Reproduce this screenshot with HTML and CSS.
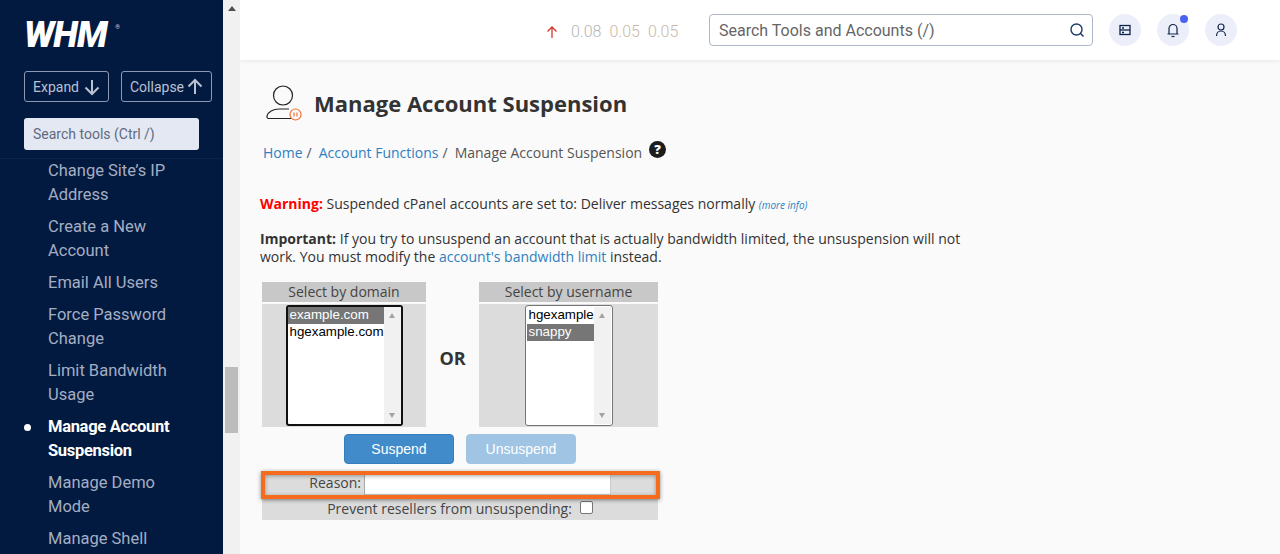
FILE: index.html
```html
<!DOCTYPE html>
<html lang="en">
<head>
    <meta charset="UTF-8">
    <meta name="viewport" content="width=device-width, initial-scale=1.0">
    <title>Manage Account Suspension</title>
    <link rel="stylesheet" href="styles.css">
</head>
<body>

    <!-- Sidebar -->
    <div class="sidebar">
        <div class="side-head">
            <div class="logo">WHM<span class="logo-reg">®</span></div>
            <div class="side-buttons">
                <div class="side-btn btn-expand">Expand
                    <svg width="18" height="18" viewBox="0 0 18 18" fill="none" stroke="#b9c1d3" stroke-width="2"><path d="M9 2v14M2.500 9.500 9 16l6.500-6.500"/></svg>
                </div>
                <div class="side-btn btn-collapse">Collapse
                    <svg width="18" height="18" viewBox="0 0 18 18" fill="none" stroke="#b9c1d3" stroke-width="2"><path d="M9 16V2M2.500 8.500 9 2l6.500 6.500"/></svg>
                </div>
            </div>
            <div class="side-search">Search tools (Ctrl /)</div>
        </div>
        <ul class="side-nav">
            <li>Change Site’s IP Address</li>
            <li>Create a New Account</li>
            <li>Email All Users</li>
            <li>Force Password Change</li>
            <li>Limit Bandwidth Usage</li>
            <li class="active">Manage Account Suspension</li>
            <li>Manage Demo Mode</li>
            <li>Manage Shell Access</li>
        </ul>
    </div>

    <!-- Page scrollbar of the sidebar -->
    <div class="scrollbar">
        <span class="scroll-up"></span>
        <span class="scroll-thumb"></span>
    </div>

    <div class="main">
        <div class="topbar">
            <svg class="load-arrow" width="12" height="14" viewBox="0 0 12 14" fill="none" stroke="#d9342b" stroke-width="1.300"><path d="M6 13V2M1.500 6.500 6 2l4.500 4.500"/></svg>
            <div class="loads"><span>0.08</span><span>0.05</span><span>0.05</span></div>
            <div class="top-search">
                <span>Search Tools and Accounts (/)</span>
                <svg width="16" height="16" viewBox="0 0 16 16" fill="none" stroke="#1f3a68" stroke-width="1.400"><circle cx="7.500" cy="7.500" r="5.500"/><path d="M11.500 11.500 14.500 14.500"/></svg>
            </div>
            <div class="round-btn">
                <svg width="12" height="12" viewBox="0 0 12 12" fill="none" stroke="#10244a" stroke-width="1.300"><rect x="1" y="1.500" width="10" height="9"/><path d="M1 6h10"/><path d="M3 4h2M3 8.500h2"/></svg>
            </div>
            <div class="round-btn">
                <svg width="14" height="16" viewBox="0 0 14 16" fill="none" stroke="#10244a" stroke-width="1.200"><path d="M1.500 12h11M3 12V6.500a4 4 0 0 1 8 0V12"/><path d="M5.500 14.500h3"/></svg>
                <span class="notify-dot"></span>
            </div>
            <div class="round-btn">
                <svg width="14" height="16" viewBox="0 0 14 16" fill="none" stroke="#10244a" stroke-width="1.200"><circle cx="7" cy="5" r="3"/><path d="M2.500 14c0-3 2-5 4.500-5s4.500 2 4.500 5"/></svg>
            </div>
        </div>

        <div class="content">
            <div class="page-title">
                <svg width="42" height="40" viewBox="0 0 42 40" fill="none">
                    <circle cx="20" cy="12.500" r="9.500" stroke="#222" stroke-width="1.200"/>
                    <path d="M28 35.500H6.500c-2 0-3-1-2.500-2.500 1-4 6-7 12-7h10" stroke="#222" stroke-width="1.200"/>
                    <circle cx="32.500" cy="31.500" r="5.500" fill="#fafafa" stroke="#f07238" stroke-width="1.200"/>
                    <path d="M31 29.500v4M34 29.500v4" stroke="#f07238" stroke-width="1.200"/>
                </svg>
                <h1>Manage Account Suspension</h1>
            </div>

            <div class="breadcrumb">
                <a href="#">Home</a><span class="sep">/</span>
                <a href="#">Account Functions</a><span class="sep">/</span>
                <span>Manage Account Suspension</span>
                <span class="help">?</span>
            </div>

            <p class="warning"><b>Warning:</b> Suspended cPanel accounts are set to: Deliver messages normally <a class="more" href="#">(more info)</a></p>
            <p class="important"><b>Important:</b> If you try to unsuspend an account that is actually bandwidth limited, the unsuspension will not work. You must modify the <a href="#">account's bandwidth limit</a> instead.</p>

            <div class="suspend-form">
                <div class="pickers">
                    <div class="picker picker-domain">
                        <div class="picker-head">Select by domain</div>
                        <div class="picker-body">
                            <div class="listbox listbox-focus">
                                <div class="options">
                                    <div class="option selected">example.com</div>
                                    <div class="option">hgexample.com</div>
                                </div>
                                <div class="list-scroll"><span class="tri-up"></span><span class="tri-down"></span></div>
                            </div>
                        </div>
                    </div>
                    <div class="or">OR</div>
                    <div class="picker picker-user">
                        <div class="picker-head">Select by username</div>
                        <div class="picker-body">
                            <div class="listbox">
                                <div class="options">
                                    <div class="option">hgexample</div>
                                    <div class="option selected">snappy</div>
                                </div>
                                <div class="list-scroll"><span class="tri-up"></span><span class="tri-down"></span></div>
                            </div>
                        </div>
                    </div>
                </div>

                <div class="form-buttons">
                    <div class="btn">Suspend</div>
                    <div class="btn btn-off">Unsuspend</div>
                </div>

                <div class="reason-wrap">
                    <div class="row-reason">
                        <span class="reason-label">Reason:</span>
                        <span class="reason-input"></span>
                    </div>
                    <div class="highlight"></div>
                </div>
                <div class="row-prevent">
                    <span>Prevent resellers from unsuspending:</span>
                    <span class="checkbox"></span>
                </div>
            </div>
        </div>
    </div>

</body>
</html>
```

FILE: styles.css
```css
* {
    box-sizing: border-box;
}
html, body {
    height: 100%;
}
body {
    margin: 0;
    display: flex;
    height: 554px;
    overflow: hidden;
    font-family: "Open Sans", sans-serif;
    font-size: 14px;
    color: #333;
    background: #fafafa;
}
a {
    color: #2f7fc1;
    text-decoration: none;
}

/* Sidebar */
.sidebar {
    width: 223px;
    flex-shrink: 0;
    background: #031a40;
    font-family: Roboto, sans-serif;
    overflow: hidden;
}
.side-head {
    height: 159px;
    padding: 18px 0 0 24px;
    border-bottom: 1px solid #0d2449;
}
.logo {
    position: relative;
    width: 93px;
    height: 35px;
    font-size: 36px;
    line-height: 35px;
    font-weight: 900;
    font-style: italic;
    color: #fff;
    letter-spacing: -1px;
}
.logo-reg {
    position: absolute;
    top: -9px;
    right: -3px;
    font-size: 6px;
    font-weight: 400;
    font-style: normal;
    letter-spacing: 0;
    color: #cfd5e2;
}
.side-buttons {
    display: flex;
    gap: 12px;
    margin-top: 18px;
}
.side-btn {
    display: flex;
    align-items: center;
    justify-content: space-between;
    height: 31px;
    padding: 0 7px 0 8px;
    border: 1px solid #8d99b3;
    border-radius: 3px;
    font-size: 14px;
    color: #b9c1d3;
}
.btn-expand {
    width: 85px;
}
.btn-collapse {
    width: 91px;
}
.side-search {
    width: 175px;
    height: 32px;
    margin-top: 16px;
    padding-left: 9px;
    background: #e4e8f2;
    border-radius: 3px;
    font-size: 14px;
    line-height: 32px;
    color: #5f6a80;
}
.side-nav {
    list-style: none;
    margin: 0;
    padding: 0 24px 0 48px;
    font-size: 16.500px;
    line-height: 24px;
    color: #a3aec3;
}
.side-nav li {
    margin-bottom: 8px;
    position: relative;
}
.side-nav .active {
    color: #fff;
    font-weight: 700;
    letter-spacing: -0.300px;
}
.side-nav .active::before {
    content: "";
    position: absolute;
    left: -24px;
    top: 9px;
    width: 7px;
    height: 7px;
    border-radius: 50%;
    background: #fff;
}

/* Scrollbar */
.scrollbar {
    position: relative;
    width: 17px;
    flex-shrink: 0;
    background: #f1f1f1;
}
.scroll-up {
    position: absolute;
    top: 6px;
    left: 5px;
    border-left: 4px solid transparent;
    border-right: 4px solid transparent;
    border-bottom: 5px solid #505050;
}
.scroll-thumb {
    position: absolute;
    top: 367px;
    left: 2px;
    width: 13px;
    height: 66px;
    background: #bcbcbc;
}

/* Top bar */
.main {
    flex: 1;
    min-width: 0;
}
.topbar {
    display: flex;
    align-items: center;
    height: 60px;
    padding-right: 32px;
    background: #fff;
    box-shadow: 0 1px 4px rgba(0, 0, 0, 0.08);
}
.load-arrow {
    margin-left: 306px;
    margin-top: 4px;
}
.loads {
    display: flex;
    gap: 8px;
    width: 138px;
    margin-left: 13px;
    margin-top: 3px;
    font-family: Roboto, sans-serif;
    font-weight: 300;
    font-size: 16px;
    color: #b5b5b5;
}
.loads span:nth-child(2), .loads span:nth-child(3) {
    color: #c9b8a8;
}
.top-search {
    display: flex;
    align-items: center;
    justify-content: space-between;
    width: 384px;
    height: 32px;
    padding: 0 7px 0 9px;
    border: 1px solid #aeb6c9;
    border-radius: 4px;
    font-family: Roboto, sans-serif;
    font-size: 16px;
    color: #666;
}
.round-btn {
    position: relative;
    display: flex;
    align-items: center;
    justify-content: center;
    width: 32px;
    height: 32px;
    margin-left: 16px;
    border-radius: 50%;
    background: #eceefa;
}
.notify-dot {
    position: absolute;
    top: 1px;
    right: 1px;
    width: 8px;
    height: 8px;
    border-radius: 50%;
    background: #4a63f0;
}

/* Content */
.content {
    padding: 23px 0 0 20px;
}
.page-title {
    display: flex;
    align-items: center;
    height: 40px;
    padding-left: 3px;
}
.page-title h1 {
    margin: 0 0 0 9px;
    font-size: 22px;
    font-weight: 700;
    color: #333;
}
.breadcrumb {
    display: flex;
    align-items: center;
    margin-top: 17px;
    padding-left: 3px;
    height: 24px;
    color: #555;
}
.breadcrumb .sep {
    margin: 0 7px 0 4px;
}
.help {
    width: 17px;
    height: 17px;
    margin: -5px 0 0 7px;
    border-radius: 50%;
    background: #1c1c1c;
    color: #fff;
    font-size: 13px;
    font-weight: 800;
    line-height: 17px;
    text-align: center;
}
.warning {
    margin: 31px 0 0;
    line-height: 18px;
}
.warning b {
    color: #f00;
}
.more {
    font-size: 10px;
    font-style: italic;
}
.important {
    width: 720px;
    margin: 16px 0 0;
    line-height: 18px;
}

/* Suspend form */
.suspend-form {
    width: 396px;
    margin: 16px 0 0 2px;
}
.pickers {
    display: flex;
}
.picker-domain {
    width: 164px;
}
.picker-user {
    width: 179px;
}
.or {
    width: 53px;
    padding-top: 64px;
    font-size: 18px;
    font-weight: 700;
    text-align: center;
}
.picker-head {
    height: 20px;
    background: #c8c8c8;
    line-height: 20px;
    text-align: center;
    color: #444;
}
.picker-body {
    display: flex;
    justify-content: center;
    height: 123px;
    margin-top: 2px;
    padding-top: 1px;
    background: #dcdcdc;
}
.listbox {
    display: flex;
    height: 121px;
    padding: 1px;
    background: #fff;
    border: 1px solid #767676;
    border-radius: 3px;
    font-family: "Liberation Sans", Arial, sans-serif;
    font-size: 13.330px;
    color: #000;
}
.picker-domain .listbox {
    width: 117px;
}
.picker-user .listbox {
    width: 88px;
}
.listbox-focus {
    border: 2px solid #101010;
    padding: 0;
}
.options {
    flex: 1;
    min-width: 0;
}
.option {
    height: 17px;
    padding: 0 2px;
    line-height: 16px;
    white-space: nowrap;
}
.option.selected {
    background: #767676;
    color: #fff;
}
.list-scroll {
    position: relative;
    width: 17px;
    flex-shrink: 0;
    background: #f1f1f1;
}
.tri-up, .tri-down {
    position: absolute;
    left: 5px;
    border-left: 3.500px solid transparent;
    border-right: 3.500px solid transparent;
}
.tri-up {
    top: 6px;
    border-bottom: 5px solid #a3a3a3;
}
.tri-down {
    bottom: 6px;
    border-top: 5px solid #a3a3a3;
}
.form-buttons {
    display: flex;
    justify-content: center;
    gap: 12px;
    margin-top: 7px;
}
.btn {
    width: 110px;
    height: 30px;
    background: #428bca;
    border: 1px solid #357ebd;
    border-radius: 4px;
    color: #fff;
    font-family: "Liberation Sans", Arial, sans-serif;
    font-size: 14px;
    line-height: 28px;
    text-align: center;
}
.btn-off {
    background: #a0c5e4;
    border-color: #a0c5e4;
}
.reason-wrap {
    position: relative;
    margin-top: 8px;
}
.row-reason {
    display: flex;
    height: 25px;
    background: #dcdcdc;
}
.reason-label {
    width: 102px;
    padding-right: 3px;
    padding-top: 1px;
    text-align: right;
    color: #444;
}
.reason-input {
    width: 247px;
    height: 20px;
    margin-top: 3px;
    background: #fff;
    border-left: 1px solid #aaa;
    border-bottom: 1px solid #ccc;
    border-right: 1px solid #ccc;
}
/* orange annotation box drawn over the row */
.highlight {
    position: absolute;
    top: -1px;
    left: -1px;
    width: 399px;
    height: 28px;
    border: 4px solid #f56c1f;
    box-shadow: 0 1px 4px rgba(0, 0, 0, 0.45), inset 0 1px 4px rgba(0, 0, 0, 0.35);
}
.row-prevent {
    display: flex;
    align-items: center;
    justify-content: center;
    gap: 8px;
    height: 23px;
    background: #dcdcdc;
    color: #444;
}
.checkbox {
    width: 13px;
    height: 13px;
    margin-top: -2px;
    background: #fff;
    border: 1px solid #767676;
    border-radius: 2px;
}
```
